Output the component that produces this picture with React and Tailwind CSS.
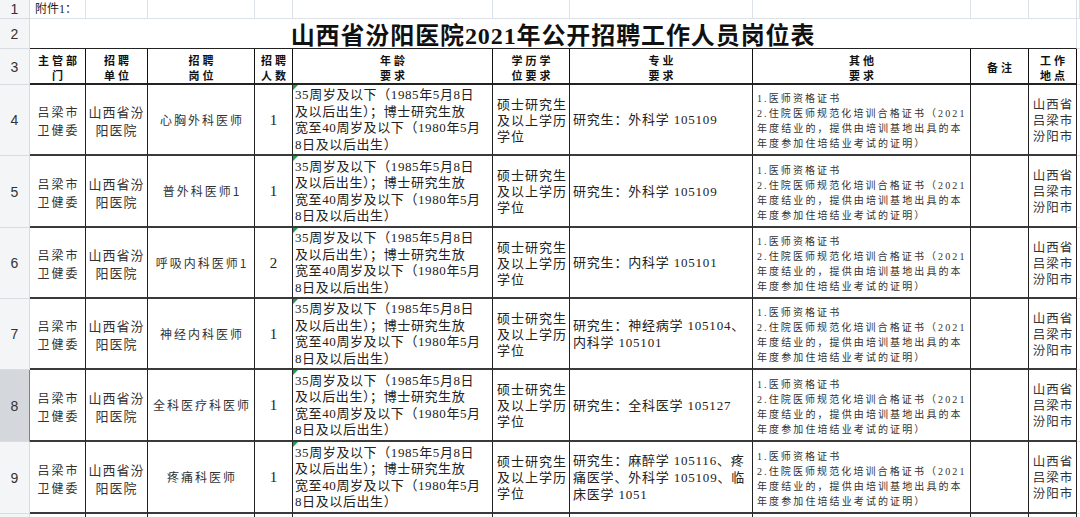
import React from 'react';

const cols = [30, 56, 62, 107, 38, 200, 77, 183, 218, 58, 48, 3];

const headers = [
  ['主管部', '门'],
  ['招聘', '单位'],
  ['招聘', '岗位'],
  ['招聘', '人数'],
  ['年龄', '要求'],
  ['学历学', '位要求'],
  ['专业', '要求'],
  ['其他', '要求'],
  ['备注'],
  ['工作', '地点'],
];

const age = [
  '35周岁及以下（1985年5月8日',
  '及以后出生）；博士研究生放',
  '宽至40周岁及以下（1980年5月',
  '8日及以后出生）',
];

const other = [
  '1.医师资格证书',
  '2.住院医师规范化培训合格证书（2021',
  '年度结业的，提供由培训基地出具的本',
  '年度参加住培结业考试的证明）',
];

const rows = [
  {n: 4, h: 'h-[71px]', post: '心胸外科医师', num: '1', major: ['研究生：外科学 105109']},
  {n: 5, h: 'h-[72px]', post: '普外科医师1', num: '1', major: ['研究生：外科学 105109']},
  {n: 6, h: 'h-[71px]', post: '呼吸内科医师1', num: '2', major: ['研究生：内科学 105101']},
  {n: 7, h: 'h-[71px]', post: '神经内科医师', num: '1', major: ['研究生：神经病学 105104、', '内科学 105101']},
  {n: 8, h: 'h-[72px]', post: '全科医疗科医师', num: '1', major: ['研究生：全科医学 105127'], selected: true},
  {n: 9, h: 'h-[72px]', post: '疼痛科医师', num: '1', major: ['研究生：麻醉学 105116、疼', '痛医学、外科学 105109、临', '床医学 1051']},
];

function Lines({items}) {
  return items.map((t, i) => (
    <div key={i} className="whitespace-nowrap">{t}</div>
  ));
}

function RowHead({n, selected}) {
  return (
    <td
      className={
        'p-0 text-center align-middle text-[14px] leading-[16px] font-["Liberation_Sans",sans-serif] text-[#333] border-b border-b-[#d8dce2] border-r ' +
        (selected ? 'bg-[#d4d7dc] border-r-[#2fae63]' : 'bg-[#f4f5f7] border-r-[#d8dce2]')
      }
    >
      {n}
    </td>
  );
}

export default function App() {
  const cell = 'border-r border-r-[#222] border-b-2 border-b-[#3a3a3a] align-middle';
  return (
    <div className="w-[1080px] h-[517px] overflow-hidden bg-white text-[#222] leading-[16px] font-['Liberation_Serif','Noto_Sans_CJK_SC',serif]">
      <table className="w-[1080px] table-fixed border-separate border-spacing-0">
        <colgroup>
          {cols.map((w, i) => (
            <col key={i} style={{width: w}} />
          ))}
        </colgroup>
        <tbody>
          {/* row 1 */}
          <tr>
            <RowHead n={1} />
            <td className="p-0 border-r border-b border-[#dde1e8]">
              <div className="h-[18px] flex items-center pl-[5px] text-[12px] leading-[16px] whitespace-nowrap overflow-hidden">附件1：</div>
            </td>
            {cols.slice(2).map((_, i) => (
              <td key={i} className="p-0 border-r border-b border-[#dde1e8]"></td>
            ))}
          </tr>
          {/* row 2 title */}
          <tr>
            <RowHead n={2} />
            <td colSpan={10} className="p-0 border-b border-b-[#222] border-r border-r-[#dde1e8]">
              <div className="h-[29px] pt-[5px] flex items-center justify-center overflow-hidden">
                <span className="text-[24px] leading-[24px] font-bold tracking-[0.9px] text-[#111] whitespace-nowrap">
                  山西省汾阳医院2021年公开招聘工作人员岗位表
                </span>
              </div>
            </td>
            <td className="p-0 border-b border-[#dde1e8]"></td>
          </tr>
          {/* row 3 headers */}
          <tr>
            <RowHead n={3} />
            {headers.map((h, i) => (
              <td key={i} className="p-0 border-r border-r-[#111] border-b-2 border-b-[#222]">
                <div className="h-[34px] pt-[3px] flex flex-col justify-center items-center overflow-hidden pl-[3px] text-[11px] font-bold tracking-[3px] text-[#111] font-['Noto_Sans_CJK_SC',sans-serif]">
                  {h.map((t, j) => (
                    <div key={j} className="leading-[15px] whitespace-nowrap">{t}</div>
                  ))}
                </div>
              </td>
            ))}
            <td className="p-0 border-b border-[#dde1e8]"></td>
          </tr>
          {rows.map((r) => (
            <tr key={r.n} className={r.h}>
              <RowHead n={r.n} selected={r.selected} />
              <td className={cell + ' text-center text-[12px] leading-[18px] tracking-[2px] pl-[2px] pt-[3px] font-["Noto_Sans_CJK_SC",sans-serif] text-[#333]'}>
                <div>吕梁市</div>
                <div>卫健委</div>
              </td>
              <td className={cell + ' text-center text-[13px] leading-[18px] tracking-[1px] pt-[3px] font-["Noto_Sans_CJK_SC",sans-serif] text-[#333]'}>
                <div>山西省汾</div>
                <div>阳医院</div>
              </td>
              <td className={cell + ' text-center text-[12px] tracking-[2px] pl-[2px] whitespace-nowrap font-["Noto_Sans_CJK_SC",sans-serif] text-[#333]'}>
                {r.post}
              </td>
              <td className={cell + ' text-center text-[15px]'}>{r.num}</td>
              <td className={cell + ' relative pl-[2px] pt-[1px] text-[13px] leading-[16.5px] tracking-[0.6px]'}>
                <span className="absolute left-0 top-0 w-0 h-0 border-t-[5px] border-t-[#1f9d55] border-r-[5px] border-r-transparent"></span>
                <Lines items={age} />
              </td>
              <td className={cell + ' pl-[4px] pt-[2px] text-[13px] leading-[16px] tracking-[1px]'}>
                <Lines items={['硕士研究生', '及以上学历', '学位']} />
              </td>
              <td className={cell + ' pl-[3px] text-[13px] leading-[17px] tracking-[0.8px]'}>
                <Lines items={r.major} />
              </td>
              <td className={cell + ' pl-[4px] pt-[3px] text-[10px] leading-[15px] tracking-[2.1px] text-[#333]'}>
                <Lines items={other} />
              </td>
              <td className={cell}></td>
              <td className={cell + ' text-center pl-[1px] pt-[2px] text-[12.5px] leading-[16px] tracking-[1px] text-[#333]'}>
                <div>山西省</div>
                <div>吕梁市</div>
                <div>汾阳市</div>
              </td>
              <td className="p-0 border-b border-[#dde1e8]"></td>
            </tr>
          ))}
          {/* row 10, only its top edge is in view */}
          <tr className="h-[20px]">
            <td className="p-0 bg-[#f4f5f7] border-r border-r-[#d8dce2]"></td>
            {cols.slice(1, 11).map((_, i) => (
              <td key={i} className="p-0 border-r border-r-[#222]"></td>
            ))}
            <td className="p-0"></td>
          </tr>
        </tbody>
      </table>
    </div>
  );
}
